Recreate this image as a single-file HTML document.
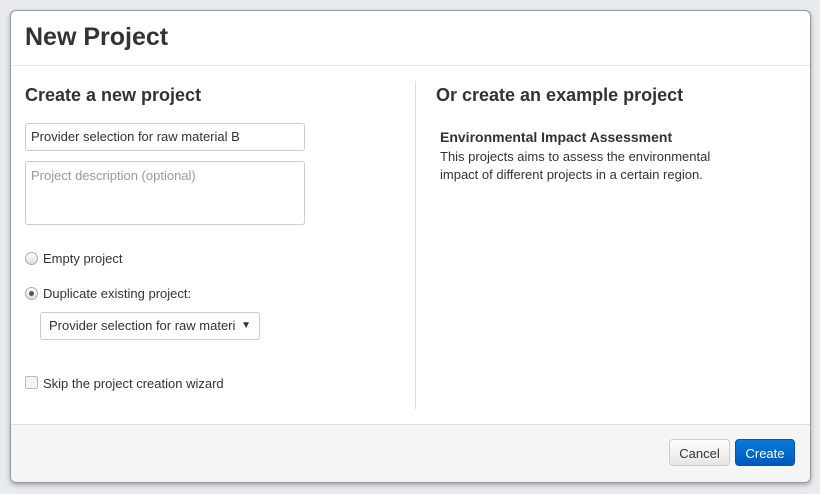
<!DOCTYPE html>
<html><head><style>
body{margin:0;width:820px;height:494px;background:#e7eaee;font-family:"Liberation Sans",sans-serif;color:#333;position:relative;overflow:hidden}
.m{position:absolute;left:10px;top:10px;width:799px;height:471px;background:#fff;border:1px solid #999;border-radius:6px;box-shadow:0 2px 5px rgba(0,0,0,.3);overflow:hidden}
.hd{height:54px;border-bottom:1px solid #e5e5e5}
.hd h1{margin:0;position:absolute;left:14px;top:12px;font-size:25px;font-weight:bold}
h2{position:absolute;margin:0;font-size:18px;font-weight:bold}
.in{position:absolute;border:1px solid #ccc;border-radius:3px;font-size:13px;box-sizing:border-box;padding:0 5px}
.vl{position:absolute;left:404px;top:70px;width:1px;height:328px;background:#ddd}
.ft{position:absolute;left:0;top:413px;width:799px;height:58px;background:#f5f5f5;border-top:1px solid #ddd}
.t{position:absolute;font-size:13px}
.rad{position:absolute;width:11px;height:11px;border:1px solid #aaa;border-radius:50%;background:linear-gradient(#fff,#ddd)}
.btn{position:absolute;top:14px;height:27px;border-radius:4px;font-size:13px;text-align:center;line-height:27px;box-sizing:border-box}
</style></head><body>
<div class="m">
<div class="hd"><h1>New Project</h1></div>
<h2 style="left:14px;top:74px">Create a new project</h2>
<h2 style="left:425px;top:74px">Or create an example project</h2>
<div class="vl"></div>
<div class="in" style="left:14px;top:112px;width:280px;height:28px;line-height:26px">Provider selection for raw material B</div>
<div class="in" style="left:14px;top:150px;width:280px;height:64px;padding-top:6px;color:#999">Project description (optional)</div>
<div class="rad" style="left:14px;top:241px"></div>
<div class="t" style="left:32px;top:240px">Empty project</div>
<div class="rad" style="left:14px;top:276px"><div style="position:absolute;left:3px;top:3px;width:5px;height:5px;border-radius:50%;background:#555"></div></div>
<div class="t" style="left:32px;top:275px">Duplicate existing project:</div>
<div class="in" style="left:29px;top:301px;width:220px;height:28px;line-height:26px;padding-left:8px;background:#fff"><span style="display:block;width:188px;overflow:hidden;white-space:nowrap">Provider selection for raw materi</span><span style="position:absolute;right:8px;top:0;font-size:10px">▼</span></div>
<div style="position:absolute;left:14px;top:365px;width:11px;height:11px;border:1px solid #bbb;border-radius:2px;background:#f3f3f3"></div>
<div class="t" style="left:32px;top:365px">Skip the project creation wizard</div>
<div class="t" style="left:429px;top:118px;font-weight:bold;font-size:14px">Environmental Impact Assessment</div>
<div class="t" style="left:429px;top:137px;line-height:18px;width:300px">This projects aims to assess the environmental<br>impact of different projects in a certain region.</div>
<div class="ft">
<div class="btn" style="left:658px;width:61px;border:1px solid #ccc;background:linear-gradient(#fff,#e6e6e6)">Cancel</div>
<div class="btn" style="left:724px;width:60px;background:linear-gradient(#0a7ad8,#0059bb);color:#fff;border:1px solid #0055aa">Create</div>
</div>
</div>
</body></html>
